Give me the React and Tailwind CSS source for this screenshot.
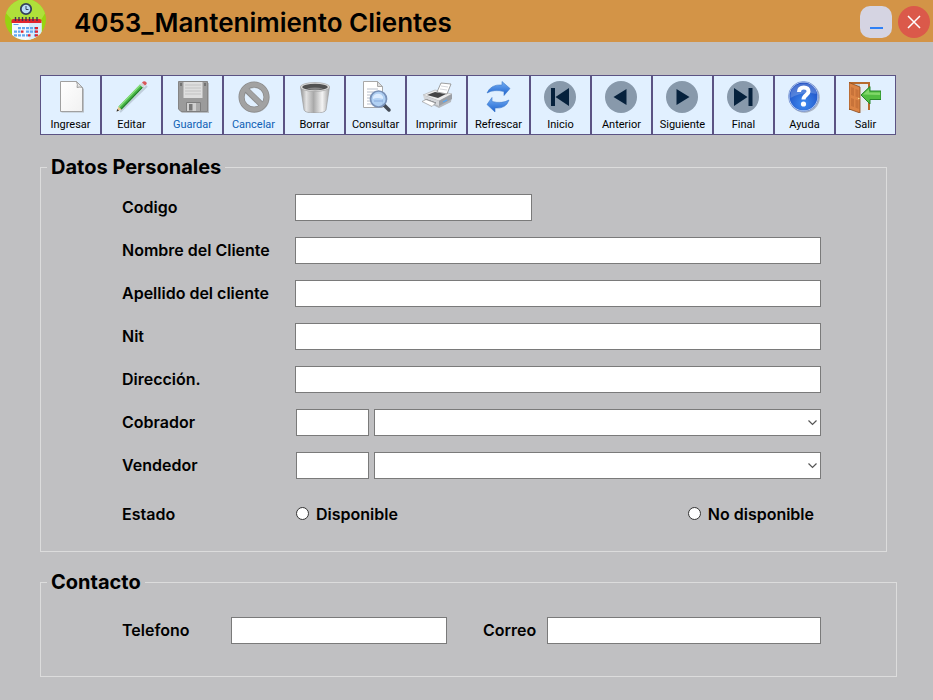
import React from "react";

function CalendarLogo() {
  return (
    <svg viewBox="0 0 42 42" className="h-[42px] w-[42px]" aria-hidden="true">
      <defs>
        <clipPath id="logoClip">
          <circle cx="20.500" cy="19.500" r="20.500" />
        </clipPath>
      </defs>
      <g clipPath="url(#logoClip)">
        <rect width="42" height="42" fill="#97d410" />
        <path d="M0 0H42V10L36 20H7L0 12Z" fill="#afe03a" />
        <path d="M7 21H36.500V42H7Z" fill="#f4f9fe" />
        <path d="M24 22H36.500V42H24Z" fill="#d9ecfb" />
        <path d="M6.500 23V21q0-2 2-2h26q2 0 2 2v2Z" fill="#e0252e" />
        <g stroke="#3a3452" strokeWidth="1.400">
          <path d="M10.500 17v4M14 17v4M17.500 17v4M21 17v4M24.500 17v4M28 17v4M32 17v4" />
        </g>
        <path d="M8.500 24.500h5" stroke="#5a9fe8" strokeWidth="1" />
        <g fill="#62a8ee">
          <path d="M13 27h3v2.200h-3zM17 27h3v2.200h-3zM21 27h3v2.200h-3zM25 27h3v2.200h-3zM29 27h3v2.200h-3zM9 30.500h3v2.200H9zM13 30.500h2.500v2.200H13zM21 30.500h3v2.200h-3zM25 30.500h3v2.200h-3zM29 30.500h2.500v2.200H29zM9 34.200h3v2.200H9zM13 34.200h3v2.200h-3zM17 34.200h3v2.200h-3zM21 34.200h2v2.200h-2zM29 34.200h2.500v2.200H29z" />
        </g>
        <g fill="#e0252e">
          <path d="M30 27h3v2.200h-3zM16 30.500h2.500v2.200H16zM30 30.500h3v2.200h-3zM23 34.200h2.500v2.200H23zM30 34.200h3v2.200h-3z" />
        </g>
        <circle cx="21" cy="9" r="5.200" fill="#b9dcf7" stroke="#33405c" strokeWidth="1.800" />
        <path d="M21 6v3.500h2.500" fill="none" stroke="#33405c" strokeWidth="1" />
      </g>
    </svg>
  );
}

function NewIcon() {
  return (
    <>
      <defs>
        <linearGradient id="paper" x1="0" y1="0" x2="1" y2="1">
          <stop offset="0" stopColor="#ffffff" />
          <stop offset="1" stopColor="#f1f1f1" />
        </linearGradient>
      </defs>
      <path d="M6.500 1.500H22.500L29 8V31.500H6.500Z" fill="#b9bfc6" />
      <path d="M5.500.5H21.500L27.500 6.500V30.500H5.500Z" fill="url(#paper)" stroke="#a0a0a0" />
      <path d="M21.500.5Q23 4 22 6.500Q25 5.500 27.500 6.500Z" fill="#e6e6e6" stroke="#a0a0a0" />
    </>
  );
}

function PencilIcon() {
  return (
    <>
      <path d="M4 31L31 5" stroke="#aab7c4" strokeWidth="2" opacity=".6" />
      <path d="M.5 30.500L2.500 25.500L5.500 28.500Z" fill="#e7c48b" />
      <path d="M.5 30.500L1.300 28L3 29.700Z" fill="#2b2b2b" />
      <path d="M2.500 25.500L24.500 3L27.500 6L5.500 28.500Z" fill="#44b444" />
      <path d="M2.500 25.500L24.500 3L25.500 4L3.500 26.500Z" fill="#8be07f" />
      <path d="M4.700 27.700L26.700 5.200L27.500 6L5.500 28.500Z" fill="#237a2a" />
      <path d="M23.800 3.700L26 1.500L29 4.500L26.800 6.700Z" fill="#d4d7db" />
      <path d="M26 1.500Q28-.5 30.200 1Q31.500 3 29 4.500Z" fill="#d9575a" />
    </>
  );
}

function SaveIcon() {
  return (
    <>
      <path d="M2 2H32V32H5L2 29Z" fill="#b9bec4" />
      <path d="M1.500.5H30.500V30.500H4L1.500 28Z" fill="#9b9b9b" stroke="#858585" />
      <path d="M6.500 1H25.500V17H6.500Z" fill="#dedede" />
      <path d="M8 4h16M8 7h16M8 10h16M8 13h16" stroke="#c2c2c2" />
      <path d="M3 2h2v3H3zM27 2h2v3h-2z" fill="#737373" />
      <path d="M9.500 21.500H23.500V30.500H9.500Z" fill="#cfcfcf" stroke="#7d7d7d" />
      <path d="M12 23h3.500v6.500H12Z" fill="#777" />
      <path d="M19 22h4v8h-4Z" fill="#a9a9a9" />
    </>
  );
}

function CancelIcon() {
  return (
    <>
      <circle cx="16.500" cy="17" r="12.500" fill="none" stroke="#bcc5cd" strokeWidth="5" />
      <path d="M7 7.500L25 25" stroke="#8b8b8b" strokeWidth="6" />
      <circle cx="16" cy="16" r="12.500" fill="none" stroke="#8b8b8b" strokeWidth="6" />
      <path d="M7 7L25 25" stroke="#a2a2a2" strokeWidth="4.500" />
      <circle cx="16" cy="16" r="12.500" fill="none" stroke="#a2a2a2" strokeWidth="4.500" />
    </>
  );
}

function TrashIcon() {
  return (
    <>
      <defs>
        <linearGradient id="metal">
          <stop offset="0" stopColor="#8f8f8f" />
          <stop offset=".2" stopColor="#e3e3e3" />
          <stop offset=".45" stopColor="#a9a9a9" />
          <stop offset=".75" stopColor="#f4f4f4" />
          <stop offset="1" stopColor="#a0a0a0" />
        </linearGradient>
      </defs>
      <path d="M1.500 6L5 29Q6 32 16 32T27 29L30.500 6Z" fill="url(#metal)" stroke="#959595" strokeWidth=".6" />
      <ellipse cx="16" cy="6" rx="14.700" ry="4.500" fill="#dedede" stroke="#9a9a9a" strokeWidth=".6" />
      <ellipse cx="16" cy="6" rx="12.700" ry="3.200" fill="#515151" />
      <path d="M8 7.500Q16 5.500 24 7.500Q16 10.500 8 7.500Z" fill="#858585" />
    </>
  );
}

function SearchIcon() {
  return (
    <>
      <path d="M3.500.5H17.500L22.500 5.500V26.500H3.500Z" fill="#fff" stroke="#a8a8a8" />
      <path d="M17.500.5L17.500 5.500H22.500Z" fill="#ddd" stroke="#a8a8a8" />
      <path d="M7 8h11M7 11h12M7 14h5M7 17h4M7 20h5M7 23h7" stroke="#b8bfcb" />
      <path d="M24 24L29 29" stroke="#444b55" strokeWidth="3.500" strokeLinecap="round" />
      <circle cx="18.500" cy="18" r="8" fill="#a9ccf3" fillOpacity=".9" stroke="#7891b8" strokeWidth="1.700" />
      <path d="M13 16Q15 12 20 13Q24 15 23 18Q17 16 13 18Z" fill="#dcecff" />
      <path d="M14 20h9" stroke="#86a9dc" />
    </>
  );
}

function PrintIcon() {
  return (
    <>
      <path d="M3 16L13 10L31 14L30 21L18 27L4 20Z" fill="#b4b8bd" />
      <path d="M2 14L14 9L31 13L18 20Z" fill="#ececec" stroke="#aaa" strokeWidth=".6" />
      <path d="M6 14L14 11L25 13L17 17Z" fill="#454545" />
      <path d="M16 11L20 2L30 3L26 13Z" fill="#fff" stroke="#888" strokeWidth=".8" />
      <path d="M20 5l7 1M19 8l7 1" stroke="#c8ccd2" strokeWidth=".8" />
      <path d="M2 14L18 20V25L3 18Z" fill="#d4d6d9" />
      <path d="M18 20L31 13V18L18 25Z" fill="#9b9fa5" />
      <path d="M5 18L15 21.500L14 23L4 19Z" fill="#5c6168" />
      <path d="M1 20.500L5 18.500L14.500 22L11 25.500Z" fill="#fff" stroke="#999" strokeWidth=".7" />
      <path d="M22 21l4-2" stroke="#4fa9ff" strokeWidth="1.300" />
    </>
  );
}

function RefreshIcon() {
  return (
    <>
      <defs>
        <linearGradient id="blueArrow" x1="0" y1="0" x2="0" y2="1">
          <stop offset="0" stopColor="#74aff5" />
          <stop offset="1" stopColor="#1d62ce" />
        </linearGradient>
      </defs>
      <path
        d="M5 12Q9 3 20 4V.5L28 7.500L22 14.500V10.500Q12 8 5 12Z"
        fill="url(#blueArrow)"
        stroke="#3d78c9"
        strokeWidth=".6"
      />
      <path
        d="M27 19Q24 28 13 27V31L5 23.500L10 16.500V20.500Q20 23 27 19Z"
        fill="url(#blueArrow)"
        stroke="#3d78c9"
        strokeWidth=".6"
      />
    </>
  );
}

function RoundNavIcon({ children }) {
  return (
    <>
      <circle cx="16" cy="16" r="16" fill="#8899ab" />
      <g fill="#06213c">{children}</g>
    </>
  );
}

function HelpIcon() {
  return (
    <>
      <defs>
        <radialGradient id="helpBlue" cx=".5" cy=".75" r=".8">
          <stop offset="0" stopColor="#3f8bf0" />
          <stop offset="1" stopColor="#1846bd" />
        </radialGradient>
      </defs>
      <circle cx="16.500" cy="16.500" r="15.300" fill="#a8b3c4" />
      <circle cx="15.500" cy="15.500" r="15" fill="#e2ebf9" stroke="#6b8bd0" strokeWidth=".8" />
      <circle cx="15.500" cy="15.500" r="14" fill="url(#helpBlue)" />
      <path d="M2.500 14Q3 3 15.500 2.500T28.500 13Q15 10 2.500 17Z" fill="#fff" opacity=".2" />
      <path
        d="M11 11Q11 6.500 15.800 6.500T20.500 10.800C20.500 14 15.500 14 15.500 18.500"
        fill="none"
        stroke="#fff"
        strokeWidth="4"
      />
      <circle cx="15.500" cy="23" r="2.600" fill="#fff" />
    </>
  );
}

function ExitIcon() {
  return (
    <>
      <path d="M0 1H21V29H0Z" fill="#b86a2c" />
      <path d="M2 3H19V28H2Z" fill="#c3ccd3" />
      <path d="M11 3H19V29L11 31Z" fill="#e4ebf0" />
      <path d="M0 1.500L11 6V32L0 28Z" fill="#dc8445" stroke="#8b4c20" strokeWidth=".8" />
      <path d="M2 6L5 7V15L2 14ZM6.500 8L9.500 9V16.500L6.500 15.500ZM2 17L5 18V26L2 25ZM6.500 18.500L9.500 19.500V28L6.500 26.500Z" fill="#c8733a" />
      <circle cx="9.800" cy="17.500" r=".8" fill="#ffe08a" />
      <path d="M12 14L21 5.500V10H32V18.500H21V23Z" fill="#51bd41" stroke="#26852a" />
      <path d="M14 13.500L20 8V11.500H31V14Z" fill="#96e37b" opacity=".7" />
    </>
  );
}

const tools = [
  { label: "Ingresar", icon: <NewIcon /> },
  { label: "Editar", icon: <PencilIcon /> },
  { label: "Guardar", icon: <SaveIcon />, muted: true },
  { label: "Cancelar", icon: <CancelIcon />, muted: true },
  { label: "Borrar", icon: <TrashIcon /> },
  { label: "Consultar", icon: <SearchIcon /> },
  { label: "Imprimir", icon: <PrintIcon /> },
  { label: "Refrescar", icon: <RefreshIcon />, wide: true },
  {
    label: "Inicio",
    icon: (
      <RoundNavIcon>
        <path d="M7 7h4v18H7zM25 7v18L11.500 16z" />
      </RoundNavIcon>
    ),
  },
  {
    label: "Anterior",
    icon: (
      <RoundNavIcon>
        <path d="M21.500 8v16L8.500 16z" />
      </RoundNavIcon>
    ),
  },
  {
    label: "Siguiente",
    icon: (
      <RoundNavIcon>
        <path d="M10.500 8v16l13-8z" />
      </RoundNavIcon>
    ),
  },
  {
    label: "Final",
    icon: (
      <RoundNavIcon>
        <path d="M7 7v18l13.500-9zM21.500 7h4v18h-4z" />
      </RoundNavIcon>
    ),
  },
  { label: "Ayuda", icon: <HelpIcon /> },
  { label: "Salir", icon: <ExitIcon /> },
];

function ToolButton({ label, icon, muted, wide }) {
  return (
    <button
      type="button"
      className={`flex min-w-0 flex-col items-center border border-[#5b5384] bg-[#e1f0ff] pt-[5px] font-[Roboto,sans-serif] text-[11px] leading-4 font-normal ${
        wide ? "flex-[63]" : "flex-[61]"
      } ${muted ? "text-[#0f5fb4]" : "text-black"}`}
    >
      <svg viewBox="0 0 32 32" className="mb-1 h-8 w-8" aria-hidden="true">
        {icon}
      </svg>
      {label}
    </button>
  );
}

const boxStyle = "h-[27px] min-w-0 border border-[#7a7a7a] bg-white px-1";

function TextRow({ id, label, width = "flex-1" }) {
  return (
    <div className="flex items-center">
      <label htmlFor={id} className="w-[173px] shrink-0 pb-[2px]">
        {label}
      </label>
      <input id={id} type="text" className={`${boxStyle} ${width}`} />
    </div>
  );
}

function LookupRow({ id, label }) {
  return (
    <div className="flex items-center">
      <label htmlFor={id} className="w-[174px] shrink-0 pb-[2px]">
        {label}
      </label>
      <input id={id} type="text" className={`${boxStyle} mr-[5px] w-[73px]`} />
      <div className="relative flex flex-1">
        <select aria-label={label} className={`${boxStyle} w-full appearance-none`} />
        <svg
          viewBox="0 0 9 6"
          className="pointer-events-none absolute top-[11px] right-1 h-[6px] w-[9px]"
          aria-hidden="true"
        >
          <path d="M.5 .5L4.500 4.500L8.500 .5" fill="none" stroke="#555" strokeWidth="1.200" />
        </svg>
      </div>
    </div>
  );
}

function RadioOption({ label }) {
  return (
    <label className="flex items-center gap-[7px]">
      <input
        type="radio"
        name="estado"
        className="h-[13px] w-[13px] appearance-none rounded-full border border-[#333] bg-white checked:border-4"
      />
      {label}
    </label>
  );
}

function Group({ title, className, children }) {
  return (
    <fieldset className={`border border-[#dcdcdc] pl-[81px] ${className}`}>
      <legend className="-ml-[75px] px-1 text-[20px] leading-7 font-bold">{title}</legend>
      {children}
    </fieldset>
  );
}

export default function App() {
  return (
    <div className="min-h-screen bg-[#c0c0c2] font-[Inter,sans-serif] text-[16px] leading-5 font-semibold text-black">
      <header className="flex h-[42px] items-center bg-[#d39447] pr-[3px] pl-[5px]">
        <CalendarLogo />
        <h1 className="ml-[27px] flex-1 pt-[3px] text-[26px] leading-8 font-semibold">4053_Mantenimiento Clientes</h1>
        <button
          type="button"
          aria-label="Minimizar"
          className="mt-[2px] mr-[6px] flex h-8 w-8 items-end justify-center rounded-[10px] bg-[#d5d4e2] pb-[9px]"
        >
          <span className="h-[2px] w-[13px] bg-[#2f80f5]" />
        </button>
        <button
          type="button"
          aria-label="Cerrar"
          className="mt-[2px] flex h-8 w-8 items-center justify-center rounded-full bg-[#db594a]"
        >
          <svg viewBox="0 0 14 14" className="h-[14px] w-[14px]" aria-hidden="true">
            <path d="M1 1L13 13M13 1L1 13" stroke="#fff" strokeWidth="1.500" />
          </svg>
        </button>
      </header>

      <main className="pt-[33px] pr-9 pb-[23px] pl-10">
        <nav aria-label="Acciones" className="mr-px flex h-[60px]">
          {tools.map((tool) => (
            <ToolButton key={tool.label} {...tool} />
          ))}
        </nav>

        <form>
          <Group title="Datos Personales" className="mt-[18px] mr-[10px] pt-[13px] pr-[65px] pb-[23px]">
            <div className="flex flex-col gap-4">
              <TextRow id="codigo" label="Codigo" width="w-[237px]" />
              <TextRow id="nombre" label="Nombre del Cliente" />
              <TextRow id="apellido" label="Apellido del cliente" />
              <TextRow id="nit" label="Nit" />
              <TextRow id="direccion" label="Dirección." />
              <LookupRow id="cobrador" label="Cobrador" />
              <LookupRow id="vendedor" label="Vendedor" />
            </div>
            <div
              role="radiogroup"
              aria-labelledby="estado"
              className="mt-[22px] flex h-[27px] items-center pr-[7px] pb-[2px]"
            >
              <span id="estado" className="w-[174px] shrink-0">
                Estado
              </span>
              <div className="flex flex-1 justify-between">
                <RadioOption label="Disponible" />
                <RadioOption label="No disponible" />
              </div>
            </div>
          </Group>

          <Group title="Contacto" className="mt-4 pt-[21px] pr-[75px] pb-8">
            <div className="flex items-center">
              <label htmlFor="telefono" className="w-[109px] shrink-0 pb-[2px]">
                Telefono
              </label>
              <input id="telefono" type="tel" className={`${boxStyle} w-[216px]`} />
              <label htmlFor="correo" className="ml-9 w-16 shrink-0 pb-[2px]">
                Correo
              </label>
              <input id="correo" type="email" className={`${boxStyle} flex-1`} />
            </div>
          </Group>
        </form>
      </main>
    </div>
  );
}
